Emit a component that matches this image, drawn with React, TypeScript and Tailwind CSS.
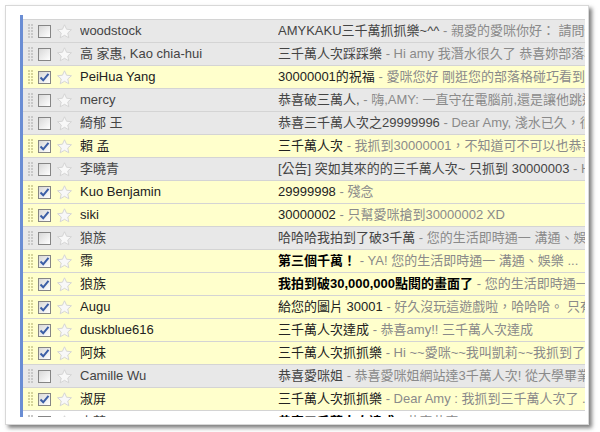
import React from 'react';

type Mail = { from: string; subject: string; snippet: string; checked?: boolean; unread?: boolean };

const MAILS: Mail[] = [
  { from: 'woodstock', subject: 'AMYKAKU三千萬抓抓樂~^^', snippet: '親愛的愛咪你好： 請問你是否' },
  { from: '高 家惠, Kao chia-hui', subject: '三千萬人次踩踩樂', snippet: 'Hi amy 我潛水很久了 恭喜妳部落格' },
  { from: 'PeiHua Yang', subject: '30000001的祝福', snippet: '愛咪您好 剛逛您的部落格碰巧看到30000001', checked: true },
  { from: 'mercy', subject: '恭喜破三萬人,', snippet: '嗨,AMY: 一直守在電腦前,還是讓他跳過了' },
  { from: '綺郁 王', subject: '恭喜三千萬人次之29999996', snippet: 'Dear Amy, 淺水已久，很' },
  { from: '賴 孟', subject: '三千萬人次', snippet: '我抓到30000001，不知道可不可以也恭喜', checked: true },
  { from: '李曉青', subject: '[公告] 突如其來的的三千萬人次~ 只抓到 30000003', snippet: 'Hi' },
  { from: 'Kuo Benjamin', subject: '29999998', snippet: '殘念', checked: true },
  { from: 'siki', subject: '30000002', snippet: '只幫愛咪搶到30000002 XD', checked: true },
  { from: '狼族', subject: '哈哈哈我拍到了破3千萬', snippet: '您的生活即時通一 溝通、娛樂' },
  { from: '霈', subject: '第三個千萬！', snippet: 'YA! 您的生活即時通一 溝通、娛樂 ...', checked: true, unread: true },
  { from: '狼族', subject: '我拍到破30,000,000點閱的畫面了', snippet: '您的生活即時通一 溝通', checked: true, unread: true },
  { from: 'Augu', subject: '給您的圖片 30001', snippet: '好久沒玩這遊戲啦，哈哈哈。 只有', checked: true },
  { from: 'duskblue616', subject: '三千萬人次達成', snippet: '恭喜amy!! 三千萬人次達成', checked: true },
  { from: '阿妹', subject: '三千萬人次抓抓樂', snippet: 'Hi ~~愛咪~~我叫凱莉~~我抓到了', checked: true },
  { from: 'Camille Wu', subject: '恭喜愛咪姐', snippet: '恭喜愛咪姐網站達3千萬人次! 從大學畢業' },
  { from: '淑屏', subject: '三千萬人次抓抓樂', snippet: 'Dear Amy : 我抓到三千萬人次了 .', checked: true },
  { from: '小莉', subject: '恭喜三千萬人次達成', snippet: '恭喜恭喜', unread: true },
];

function Grip({ yellow }: { yellow: boolean }) {
  return (
    <div className="grid grid-cols-2 gap-x-[1px] gap-y-[1px] w-[5px] ml-[5px]">
      {Array.from({ length: 10 }).map((_, i) => (
        <span key={i} className={`block w-[2px] h-[2px] ${yellow ? 'bg-[#d6d49a]' : 'bg-[#c8c8c8]'}`} />
      ))}
    </div>
  );
}

function Check({ checked }: { checked: boolean }) {
  return (
    <div className="ml-[5px] w-[13px] h-[13px] border border-[#858585] bg-gradient-to-br from-[#d8d8d8] to-white flex items-center justify-center">
      {checked && (
        <svg width="11" height="11" viewBox="0 0 11 11">
          <path d="M1.5 5.5 L4.2 8.3 L9.5 1.8" fill="none" stroke="#3b5ea6" strokeWidth="2" />
        </svg>
      )}
    </div>
  );
}

function Star() {
  return (
    <svg className="ml-[5px]" width="17" height="17" viewBox="0 0 24 24">
      <path
        d="M12 2.5l2.9 6.3 6.9.7-5.2 4.6 1.5 6.8L12 17.4l-6.1 3.5 1.5-6.8-5.2-4.6 6.9-.7z"
        fill="#f8f8f8"
        stroke="#d2d2d2"
        strokeWidth="1.3"
        strokeLinejoin="round"
      />
    </svg>
  );
}

function Row({ mail }: { mail: Mail }) {
  const yellow = !!mail.checked;
  const bg = mail.unread && !mail.checked ? 'bg-white' : yellow ? 'bg-[#ffffcc]' : 'bg-[#e8e8e8]';
  const textCol = yellow ? 'text-[#222]' : 'text-[#444]';
  return (
    <div className={`flex items-center h-[23px] border-t border-[#d4d4d4] ${bg}`}>
      <Grip yellow={yellow} />
      <Check checked={!!mail.checked} />
      <Star />
      <div className={`ml-[7px] w-[198px] shrink-0 whitespace-nowrap overflow-hidden ${textCol}`}>
        {mail.from}
      </div>
      <div className="flex-1 whitespace-nowrap overflow-hidden">
        <span className={`${textCol} ${mail.unread ? 'font-bold text-black' : ''}`}>{mail.subject}</span>
        <span className="text-[#8a8a8a]"> - {mail.snippet}</span>
      </div>
    </div>
  );
}

export default function App() {
  return (
    <div className="w-[600px] h-[432px] bg-white pt-[5px] pl-[5px] font-['Liberation_Sans','Noto_Sans_CJK_TC',sans-serif] text-[13px]">
      <div className="w-[584px] h-[420px] border border-[#d8d8d8] bg-white shadow-[3px_3px_4px_rgba(0,0,0,0.5)] pl-[14px] pt-[9px]">
        {/* message list */}
        <div className="w-[565px] h-[402px] overflow-hidden border-l-[3px] border-[#6a8dd4] pt-[4px]">
          {MAILS.map((m, i) => (
            <Row key={i} mail={m} />
          ))}
        </div>
      </div>
    </div>
  );
}
